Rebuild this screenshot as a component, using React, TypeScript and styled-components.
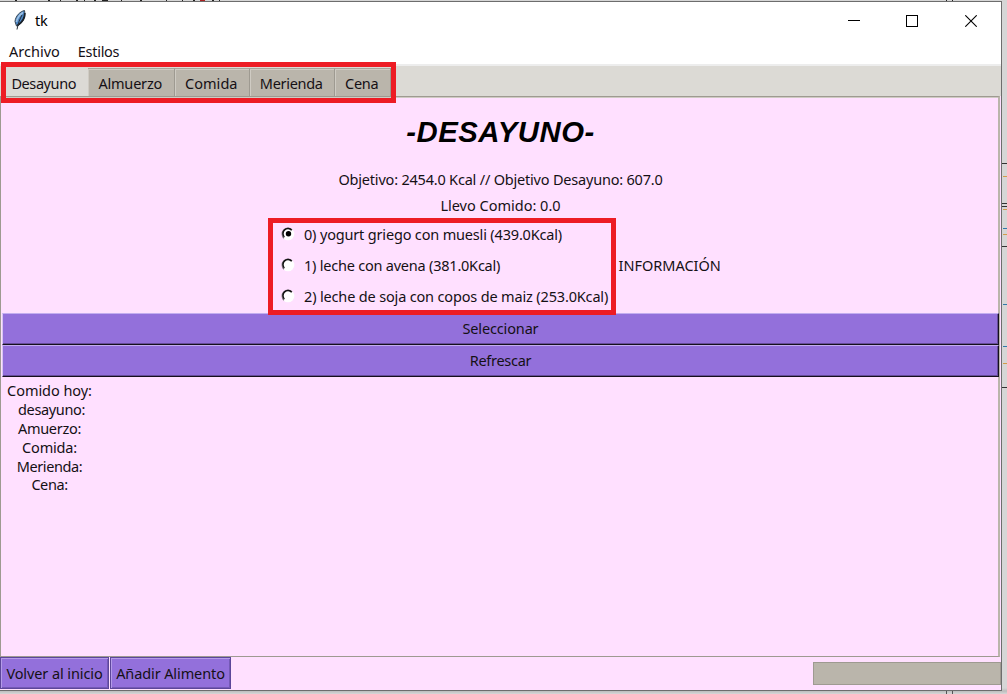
import React, { useState } from "react";
import styled, { createGlobalStyle, css } from "styled-components";

const Global = createGlobalStyle`
  * { box-sizing: border-box; }
  html, body { margin: 0; padding: 0; overflow: hidden; }
  body { background: #d6d6d6; color: #151015; font-family: "Noto Sans", "Open Sans", sans-serif; font-size: 14.5px; }
  button { font: inherit; color: inherit; border-radius: 0; padding: 0; margin: 0; }
`;

const Desktop = styled.div`
  position: relative;
  width: 1007px;
  height: 694px;
  padding-top: 1px;
  background: linear-gradient(to bottom, #d6d6d6 0, #d6d6d6 688px, #bcbcbc 691px, #d8d8d8 694px);
  overflow: hidden;
`;

const Window = styled.main`
  position: relative;
  width: 1002px;
  height: 690px;
  border: solid #6d6d6d;
  border-width: 1px 1px 1px 0;
  background: #ffe0ff;
  display: flex;
  flex-direction: column;
`;

const TitleBar = styled.header`
  height: 39px;
  flex: none;
  background: #fff;
  display: flex;
  align-items: flex-start;
  padding-left: 13px;
`;

const Caption = styled.div`
  flex: 1;
  padding: 8px 0 0 8px;
  color: #000;
`;

const Controls = styled.div`
  display: flex;
  width: 176px;
`;

const Control = styled.button`
  width: 58.3px;
  height: 38px;
  border: 0;
  background: none;
  display: flex;
  align-items: center;
  justify-content: center;
`;

const MenuBar = styled.nav`
  flex: none;
  height: 23px;
  background: #fff;
  display: flex;
  gap: 18px;
  padding-left: 9px;
`;

/* Run of text whose glyph spacing is tuned per label */
const Label = styled.span<{ $track?: number }>`
  display: inline-block;
  white-space: pre;
  line-height: 20px;
  letter-spacing: ${(p) => p.$track ?? -0.2}px;
`;

const TabStrip = styled.div`
  flex: none;
  height: 32px;
  background: #dcdad5;
  border-top: 2px solid #ededed;
  padding-left: 2px;
  display: flex;
  align-items: flex-end;
`;

const Tab = styled.button<{ $w: number; $active: boolean }>`
  width: ${(p) => p.$w}px;
  height: ${(p) => (p.$active ? 30 : 28)}px;
  border: 1px solid #9e9a91;
  border-top-color: #a8a49a;
  border-left: 0;
  border-bottom: 0;
  background: #bab5ab;
  box-shadow: inset 1px 1px 0 #cfcbc3;
  display: flex;
  align-items: center;
  justify-content: center;
  padding: 1px 1.5px 0 0;
  ${(p) => p.$active && css`
    background: #dcdad5;
    border-color: #dcdad5;
    box-shadow: none;
    padding-top: 2px;
  `}
`;

const Pane = styled.section`
  flex: none;
  height: 561px;
  border: 1px solid #9e9a91;
  border-right: 2px solid #bab5ab;
  box-shadow: inset 0 1px 0 #cfcbc3;
  margin-right: 1px;
  display: flex;
  flex-direction: column;
  padding: 0 0 0 1px;
`;

const Heading = styled.h1`
  margin: 0;
  height: 69px;
  text-align: center;
  font: italic bold 29.3px/69px "Liberation Sans", Arial, sans-serif;
  color: #000;
  letter-spacing: 0.5px;
  padding-left: 1px;
`;

const Goal = styled.div`
  height: 26px;
  display: flex;
  justify-content: center;
  align-items: center;
  padding-left: 1px;
`;

const Choices = styled.div`
  height: 94px;
  margin-bottom: 1px;
  display: flex;
  padding-left: 278px;
  align-items: center;
`;

const RadioList = styled.div`
  width: 338.5px;
  display: flex;
  flex-direction: column;
`;

const RadioRow = styled.label`
  height: 31px;
  display: flex;
  align-items: center;
  gap: 8px;
`;

const WideButton = styled.button`
  flex: none;
  width: 997px;
  height: 32px;
  border: 1px solid #15101c;
  border-top-color: #c3adf0;
  border-left-color: #d5c6f3;
  background: #9370db;
  box-shadow: inset -1px -1px 0 #664d99;
  display: flex;
  align-items: center;
  justify-content: center;
  padding-bottom: 2px;
`;

const Summary = styled.div`
  width: 96px;
  padding: 4px 1px 0 0;
  display: flex;
  flex-direction: column;
  align-items: center;
`;

const SummaryLine = styled.div<{ $shift: number }>`
  height: 18.8px;
  line-height: 18.8px;
  display: flex;
  align-items: center;
  padding-left: ${(p) => p.$shift}px;
`;

const Footer = styled.footer`
  flex: 1;
  display: flex;
  gap: 1px;
  align-items: flex-start;
`;

const FooterButton = styled.button<{ $w: number }>`
  width: ${(p) => p.$w}px;
  height: 32px;
  border: 1px solid #5c469a;
  background: #9370db;
  box-shadow: inset 1px 1px 0 #b49be8, inset -1px -1px 0 #7459b5;
  display: flex;
  align-items: center;
  justify-content: center;
`;

const Progress = styled.div`
  margin: 5px 0 0 auto;
  width: 188px;
  height: 23px;
  border: 1px solid #9e9a91;
  background: #bab5ab;
`;

const Highlight = styled.div<{ $x: number; $y: number; $w: number; $h: number }>`
  position: absolute;
  left: ${(p) => p.$x}px;
  top: ${(p) => p.$y}px;
  width: ${(p) => p.$w}px;
  height: ${(p) => p.$h}px;
  border: 5px solid #ed1c24;
  pointer-events: none;
`;

const Behind = styled.svg`
  position: absolute;
  left: 0;
  top: 0;
  pointer-events: none;
`;

const FeatherIcon = styled.svg`
  margin-top: 7px;
`;

function Feather() {
  return (
    <FeatherIcon width="14" height="22" viewBox="0 0 14 22">
      <path d="M11.500 1.500C7 2.500 2.500 7 2 12.500L3.500 17C9.500 15 13 8 11.500 1.500Z" fill="#4b86c6" stroke="#3a4651" strokeWidth="1" />
      <path d="M10 3.500C7 5.500 4 9 3.500 13" stroke="#9fc3e6" strokeWidth="1.600" fill="none" />
      <path d="M11.800 4C12 9 9 13.500 4.500 16.500" stroke="#1b232b" strokeWidth="1.800" fill="none" />
      <path d="M9 6C7 10 5 14 4 20.500" stroke="#26303a" strokeWidth="1" fill="none" />
    </FeatherIcon>
  );
}

function Radio({ checked }: { checked: boolean }) {
  return (
    <svg width="16" height="16" viewBox="0 0 16 16">
      <circle cx="8" cy="8" r="6.300" fill="#fff" />
      <path d="M4 12.200A5.700 5.700 0 0 1 12 3.800" fill="none" stroke="#807580" strokeWidth="1.300" />
      <path d="M4.300 11A4.900 4.900 0 0 1 11.700 4.200" fill="none" stroke="#111" strokeWidth="1.500" />
      {checked && <circle cx="8.500" cy="7.700" r="2.700" fill="#000" />}
    </svg>
  );
}

const tabs = [
  { name: "Desayuno", width: 86, track: -0.4 },
  { name: "Almuerzo", width: 87, track: -0.2 },
  { name: "Comida", width: 75, track: 0.05 },
  { name: "Merienda", width: 85, track: -0.3 },
  { name: "Cena", width: 56, track: -0.2 },
];

const foods = [
  { text: "0) yogurt griego con muesli (439.0Kcal)", track: -0.17 },
  { text: "1) leche con avena (381.0Kcal)", track: -0.22 },
  { text: "2) leche de soja con copos de maiz (253.0Kcal)", track: -0.16 },
];

const summary = [
  { text: "Comido hoy:", shift: 0, track: -0.05 },
  { text: "desayuno:", shift: 4, track: -0.35 },
  { text: "Amuerzo:", shift: 0, track: -0.3 },
  { text: "Comida:", shift: 0, track: -0.2 },
  { text: "Merienda:", shift: 0, track: -0.42 },
  { text: "Cena:", shift: 0, track: -0.42 },
];

export default function App() {
  const [active, setActive] = useState(0);
  const [food, setFood] = useState(0);
  return (
    <>
      <Global />
      <Desktop>
        <Behind width="1007" height="694" shapeRendering="crispEdges">
          <path d="M15 0h2M48 0h2M60 0h1M76 0h2M84 0h1M94 0h2M102 0h6M121 0h1M140 0h2M166 0h1M182 0h1M193 0h2M212 0h2M219 0h1M946 0h1M952 0h1" stroke="#222" strokeWidth="2" />
          <path d="M200 0h5" stroke="#a22" strokeWidth="2" />
          <path d="M946.500 691v3M952.500 691v3" stroke="#555" />
          <path d="M1002 163.500h5M1002 203.500h5M1002 206.500h5M1002 246.500h5M1002 387.500h5" stroke="#333" />
          <path d="M1003 176.500h4M1003 209.500h4M1003 234.500h4M1003 363.500h4" stroke="#d39b4b" />
          <path d="M1003 228.500h4M1003 304.500h4M1003 346.500h4" stroke="#3378aa" />
        </Behind>
        <Window>
          <TitleBar>
            <Feather />
            <Caption><Label $track={-0.3}>tk</Label></Caption>
            <Controls>
              <Control aria-label="Minimizar">
                <svg width="12" height="12" shapeRendering="crispEdges"><path d="M0 5.500h12" stroke="#000" /></svg>
              </Control>
              <Control aria-label="Maximizar">
                <svg width="12" height="12" shapeRendering="crispEdges"><rect x=".5" y=".5" width="11" height="11" fill="none" stroke="#000" /></svg>
              </Control>
              <Control aria-label="Cerrar">
                <svg width="12" height="12"><path d="M.3.300L11.700 11.700M11.700.300L.3 11.700" stroke="#000" strokeWidth="1.100" /></svg>
              </Control>
            </Controls>
          </TitleBar>
          <MenuBar><Label $track={0}>Archivo</Label><Label $track={-0.28}>Estilos</Label></MenuBar>
          <TabStrip>
            {tabs.map((t, i) => (
              <Tab key={t.name} $w={t.width} $active={i === active} onClick={() => setActive(i)}>
                <Label $track={t.track}>{t.name}</Label>
              </Tab>
            ))}
          </TabStrip>
          <Pane>
            <Heading>-DESAYUNO-</Heading>
            <Goal><Label>Objetivo: 2454.0 Kcal // Objetivo Desayuno: 607.0</Label></Goal>
            <Goal><Label $track={0}>Llevo Comido: 0.0</Label></Goal>
            <Choices>
              <RadioList>
                {foods.map((f, i) => (
                  <RadioRow key={f.text} onClick={() => setFood(i)}>
                    <Radio checked={i === food} />
                    <Label $track={f.track}>{f.text}</Label>
                  </RadioRow>
                ))}
              </RadioList>
              <Label $track={0}>INFORMACIÓN</Label>
            </Choices>
            <WideButton><Label $track={-0.15}>Seleccionar</Label></WideButton>
            <WideButton><Label $track={-0.28}>Refrescar</Label></WideButton>
            <Summary>
              {summary.map((s) => (
                <SummaryLine key={s.text} $shift={s.shift}><Label $track={s.track}>{s.text}</Label></SummaryLine>
              ))}
            </Summary>
          </Pane>
          <Footer>
            <FooterButton $w={109}><Label $track={-0.1}>Volver al inicio</Label></FooterButton>
            <FooterButton $w={121}><Label $track={-0.1}>Añadir Alimento</Label></FooterButton>
            <Progress />
          </Footer>
        </Window>
        <Highlight $x={1} $y={62} $w={395} $h={41} />
        <Highlight $x={268} $y={218} $w={348} $h={97} />
      </Desktop>
    </>
  );
}
